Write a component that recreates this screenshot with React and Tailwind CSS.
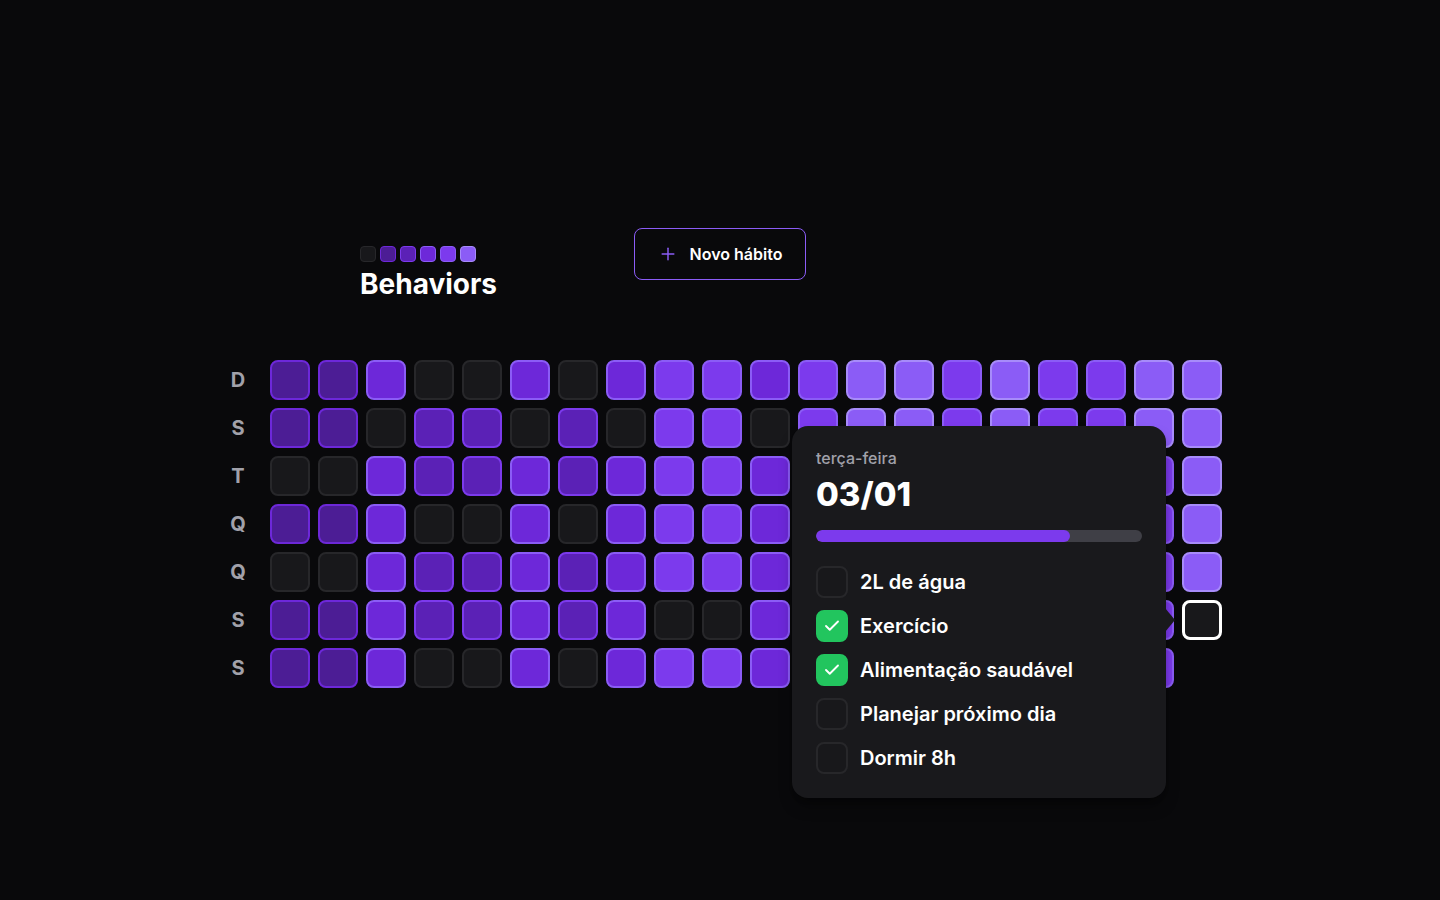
import React from 'react';
import { Plus, Check } from 'lucide-react';

const LEVELS = [
    'bg-[#18181b] border-[#27272a]',
    'bg-[#4c1d95] border-[#6d28d9]',
    'bg-[#5b21b6] border-[#7c3aed]',
    'bg-[#6d28d9] border-[#8b5cf6]',
    'bg-[#7c3aed] border-[#8b5cf6]',
    'bg-[#8b5cf6] border-[#a78bfa]',
];

const DAYS = ['D', 'S', 'T', 'Q', 'Q', 'S', 'S'];

// -1 = future day (no cell), 9 = selected day
const GRID = [
    [1, 1, 3, 0, 0, 3, 0, 3, 4, 4, 3, 4, 5, 5, 4, 5, 4, 4, 5, 5],
    [1, 1, 0, 2, 2, 0, 2, 0, 4, 4, 0, 4, 5, 5, 4, 5, 4, 4, 5, 5],
    [0, 0, 3, 2, 2, 3, 2, 3, 4, 4, 3, 4, 5, 5, 4, 5, 4, 4, 4, 5],
    [1, 1, 3, 0, 0, 3, 0, 3, 4, 4, 3, 4, 5, 5, 4, 5, 4, 4, 4, 5],
    [0, 0, 3, 2, 2, 3, 2, 3, 4, 4, 3, 4, 5, 5, 4, 5, 4, 4, 4, 5],
    [1, 1, 3, 2, 2, 3, 2, 3, 0, 0, 3, 4, 5, 5, 4, 5, 4, 4, 4, 9],
    [1, 1, 3, 0, 0, 3, 0, 3, 4, 4, 3, 4, 5, 5, 4, 5, 4, 4, 4, -1],
];

const HABITS = [
    { name: '2L de água', done: false },
    { name: 'Exercício', done: true },
    { name: 'Alimentação saudável', done: true },
    { name: 'Planejar próximo dia', done: false },
    { name: 'Dormir 8h', done: false },
];

function Cell({ level }) {
    if (level === -1) return <div className="w-10 h-10" />;
    if (level === 9) {
        return <div className="w-10 h-10 rounded-lg border-[3px] border-white bg-[#18181b]" />;
    }
    return <div className={`w-10 h-10 rounded-lg border-2 ${LEVELS[level]}`} />;
}

function DayPopover() {
    return (
        <div className="absolute left-[522px] top-[66px] w-[374px] rounded-2xl bg-[#19191c] px-6 pt-[22px] pb-6 shadow-lg shadow-black/40">
            <div className="absolute right-[-9px] top-[182px] w-0 h-0 border-y-[12px] border-y-transparent border-l-[10px] border-l-[#19191c]" />
            <p className="text-base font-medium text-[#a1a1aa] leading-5">terça-feira</p>
            <p className="mt-[6px] text-[33px] font-extrabold text-white leading-10">03/01</p>
            <div className="mt-4 h-3 w-full rounded-full bg-[#3f3f46] overflow-hidden">
                <div className="h-3 rounded-full bg-[#7c3aed]" style={{ width: '78%' }} />
            </div>
            <div className="mt-6 flex flex-col gap-3">
                {HABITS.map((h) => (
                    <div key={h.name} className="flex items-center gap-3">
                        {h.done ? (
                            <div className="w-8 h-8 rounded-lg bg-[#22c55e] border-2 border-[#22c55e] flex items-center justify-center">
                                <Check size={18} strokeWidth={2.5} className="text-white" />
                            </div>
                        ) : (
                            <div className="w-8 h-8 rounded-lg border-2 border-[#27272a] bg-[#18181b]" />
                        )}
                        <span className="text-xl font-semibold text-white leading-7">{h.name}</span>
                    </div>
                ))}
            </div>
        </div>
    );
}

export default function App() {
    return (
        <div className="min-h-[900px] w-full bg-[#09090b] text-white font-['Inter','Noto_Sans',sans-serif]">
            <div className="pt-[228px]">
                {/* Header */}
                <div className="ml-[360px] w-[446px] flex items-start justify-between">
                    <div className="pt-[18px]">
                        <div className="flex gap-1">
                            {LEVELS.map((l, i) => (
                                <div key={i} className={`w-4 h-4 rounded border ${l}`} />
                            ))}
                        </div>
                        <h1 className="mt-1 text-[28px] font-bold leading-9 text-white">Behaviors</h1>
                    </div>
                    <button className="h-[52px] w-[172px] rounded-lg border border-[#8b5cf6] flex items-center justify-center gap-3 text-white font-semibold text-base">
                        <Plus size={20} strokeWidth={1.75} className="text-[#8b5cf6]" />
                        Novo hábito
                    </button>
                </div>

                {/* Summary table */}
                <div className="mt-[58px] ml-[222px] flex gap-4">
                    <div className="flex flex-col gap-2">
                        {DAYS.map((d, i) => (
                            <div key={i} className="w-8 h-10 flex items-center justify-center text-xl font-bold text-[#a1a1aa]">
                                {d}
                            </div>
                        ))}
                    </div>
                    <div className="relative flex flex-col gap-2">
                        {GRID.map((row, r) => (
                            <div key={r} className="flex gap-2">
                                {row.map((lvl, c) => (
                                    <Cell key={c} level={lvl} />
                                ))}
                            </div>
                        ))}
                        <DayPopover />
                    </div>
                </div>
            </div>
        </div>
    );
}
